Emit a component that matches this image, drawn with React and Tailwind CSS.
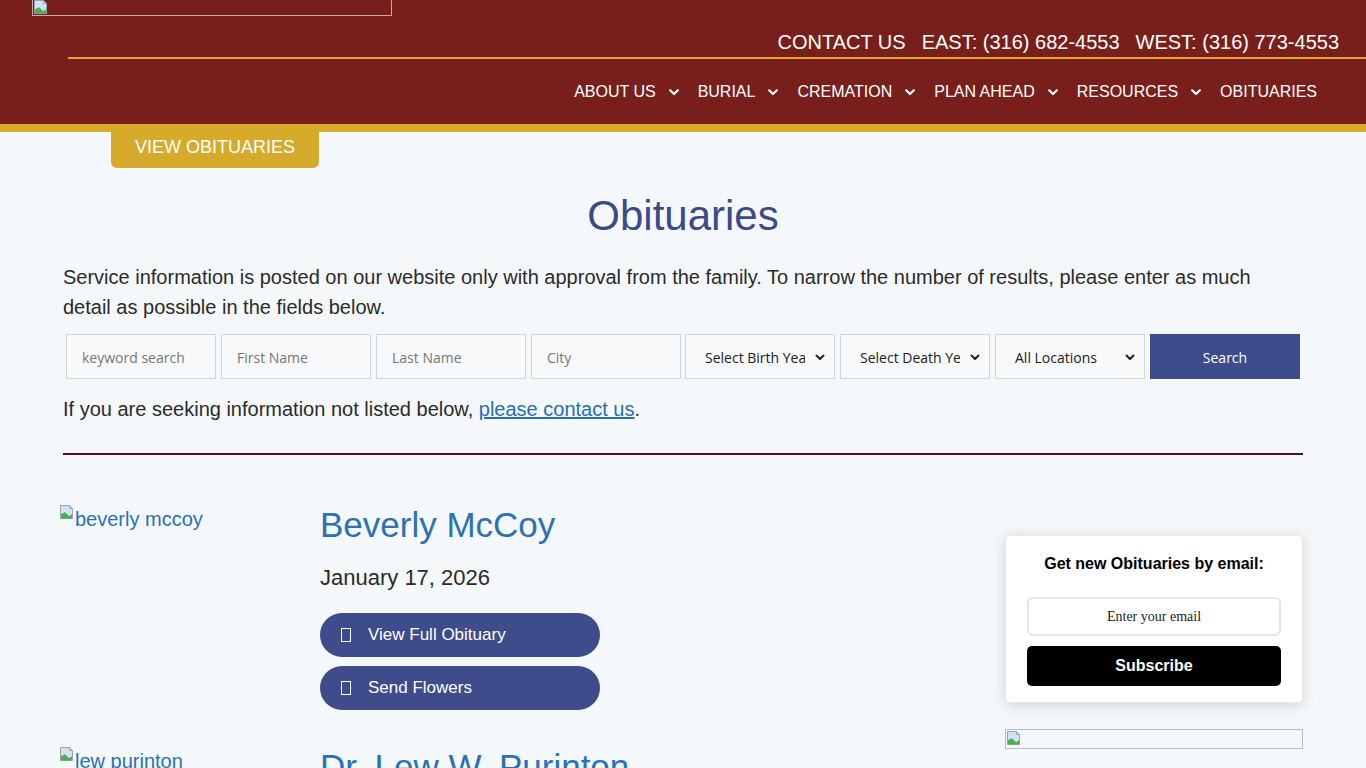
import React from "react";

const BrokenImg = () => (
  <svg width="16" height="16" viewBox="0 0 16 16" className="shrink-0">
    <path d="M1.5 1.5h9l3 3v10h-12z" fill="#f3f6fb" stroke="#9aa3ad" />
    <path d="M2 14.5 L2 10 L6 8 L10 12 L13 10 L13 14.5 Z" fill="#4caf50" />
    <path d="M2 9.5 L2 2 L10 2 L10 5 L13 5 L13 9.5 L10 11 L6 7.5 Z" fill="#cfe3f7" />
    <path d="M10.5 1.5v3h3" fill="none" stroke="#9aa3ad" />
  </svg>
);

const Chevron = () => (
  <svg width="10" height="7" viewBox="0 0 10 7" className="shrink-0">
    <path d="M1.2 1.3 L5 5 L8.8 1.3" fill="none" stroke="white" strokeWidth="2.2" strokeLinecap="round" strokeLinejoin="round" />
  </svg>
);

const SelChevron = () => (
  <svg width="10" height="7" viewBox="0 0 10 7" className="shrink-0">
    <path d="M1.5 1.5 L5 5 L8.5 1.5" fill="none" stroke="#222" strokeWidth="2" strokeLinecap="round" strokeLinejoin="round" />
  </svg>
);

const Tofu = () => (
  <span className="inline-block w-[10px] h-[14px] border border-white shrink-0" />
);

const navItems = [
  { t: "ABOUT US", c: true },
  { t: "BURIAL", c: true },
  { t: "CREMATION", c: true },
  { t: "PLAN AHEAD", c: true },
  { t: "RESOURCES", c: true },
  { t: "OBITUARIES", c: false },
];

const inputs = ["keyword search", "First Name", "Last Name", "City"];
const selects = ["Select Birth Year", "Select Death Year", "All Locations"];

function Listing({ alt, name, date }) {
  return (
    <div className="flex">
      <div className="w-[261px] ml-[-4px] shrink-0 flex items-start">
        <BrokenImg />
        <span className="text-[20px] leading-[24px] text-[#2a72b5] mt-[3px]">{alt}</span>
      </div>
      <div className="flex flex-col">
        <div className="text-[35px] leading-[42px] text-[#2a72b5]">{name}</div>
        {date && (
          <>
            <div className="mt-[19px] text-[22px] leading-[26px] text-[#2b2b2b]">{date}</div>
            <div className="mt-[22px] w-[280px] h-[44px] rounded-full bg-[#3f4c8c] flex items-center pl-[21px] gap-[17px] text-white text-[17px]">
              <Tofu />
              <span>View Full Obituary</span>
            </div>
            <div className="mt-[9px] w-[280px] h-[44px] rounded-full bg-[#3f4c8c] flex items-center pl-[21px] gap-[17px] text-white text-[17px]">
              <Tofu />
              <span>Send Flowers</span>
            </div>
          </>
        )}
      </div>
    </div>
  );
}

export default function App() {
  return (
    <div className="min-h-[768px] bg-[#f5f8fa] font-['Liberation_Sans',Arial,sans-serif] overflow-hidden">
      <header className="bg-[#781f1c] h-[124px] flex flex-col">
        <div className="pl-[32px]">
          <div className="w-[360px] h-[16px] border border-[#c9a9a7] border-t-0 flex items-end">
            <div className="-mt-[2px]"><BrokenImg /></div>
          </div>
        </div>
        <div className="mt-[14px] h-[24px] leading-[24px] text-[20px] text-white flex justify-end pr-[27px] gap-[16px] whitespace-nowrap">
          <span>CONTACT US</span>
          <span>EAST: (316) 682-4553</span>
          <span>WEST: (316) 773-4553</span>
        </div>
        <div className="mt-[3px] ml-[68px] h-[2px] bg-[#e3a23b]" />
        <nav className="mt-[22px] h-[22px] flex justify-end pr-[49px] gap-[19px] text-white text-[16px] leading-[22px]">
          {navItems.map((n) => (
            <div key={n.t} className="flex items-center gap-[13px]">
              <span>{n.t}</span>
              {n.c && <Chevron />}
            </div>
          ))}
        </nav>
      </header>
      <div className="h-[8px] bg-[#d8ab2b]" />
      <div className="pl-[111px]">
        <div className="w-[208px] h-[36px] bg-[#d6aa2b] rounded-b-[6px] flex items-center justify-center pb-[6px] text-white text-[18px]">
          VIEW OBITUARIES
        </div>
      </div>

      <main className="w-[1240px] mx-auto">
        <h1 className="mt-[24px] text-center text-[42px] leading-[48px] text-[#3d4a8a]">Obituaries</h1>
        <p className="mt-[22px] text-[20px] leading-[30px] text-[#2b2b2b]">
          Service information is posted on our website only with approval from the family. To narrow the number of results, please enter as much detail as possible in the fields below.
        </p>
        <div className="mt-[12px] pl-[3px] flex gap-[5px] font-['Open_Sans',sans-serif] text-[14px]">
          {inputs.map((p) => (
            <div key={p} className="w-[150px] h-[45px] border border-[#d3d6d9] bg-[#f7f9fa] flex items-center pl-[15px] pt-[1px] text-[#777]">
              {p}
            </div>
          ))}
          {selects.map((s, i) => (
            <div key={s} className={"w-[150px] h-[45px] border border-[#d3d6d9] bg-[#f7f9fa] flex items-center pl-[19px] pr-[9px] pt-[1px] text-[#222]" + (i === 0 ? " -ml-[1px]" : "")}>
              <span className="w-[100px] overflow-hidden whitespace-nowrap">{s}</span>
              <span className="ml-auto"><SelChevron /></span>
            </div>
          ))}
          <div className="w-[150px] h-[45px] bg-[#3f4c8c] text-white flex items-center justify-center pt-[1px]">Search</div>
        </div>
        <p className="mt-[15px] text-[20px] leading-[30px] text-[#2b2b2b]">
          If you are seeking information not listed below, <span className="text-[#2a6db0] underline">please contact us</span>.
        </p>
        <div className="mt-[29px] h-[2px] bg-[#4a1424]" />

        <div className="flex mt-[49px]">
          <div className="flex-1 flex flex-col gap-[36px]">
            <Listing alt="beverly mccoy" name="Beverly McCoy" date="January 17, 2026" />
            <Listing alt="lew purinton" name="Dr. Lew W. Purinton" />
          </div>
          <aside className="w-[298px] shrink-0 mt-[31px]">
            <div className="bg-white rounded-[5px] border border-[#e6e8ea] shadow-[0_2px_14px_rgba(0,0,0,0.15)] px-[21px] pt-[18px] pb-[16px]">
              <div className="text-center font-bold text-[16px] leading-[20px] text-black">Get new Obituaries by email:</div>
              <div className="mt-[23px] h-[39px] border-2 border-[#e6e6e6] rounded-[6px] flex items-center justify-center font-['Liberation_Serif',serif] text-[14px] text-[#222]">
                Enter your email
              </div>
              <div className="mt-[10px] h-[40px] bg-black rounded-[5px] flex items-center justify-center text-white font-bold text-[16px]">
                Subscribe
              </div>
            </div>
            <div className="mt-[26px] h-[20px] border border-[#bbbbbb] flex items-start">
              <BrokenImg />
            </div>
          </aside>
        </div>
      </main>
    </div>
  );
}
